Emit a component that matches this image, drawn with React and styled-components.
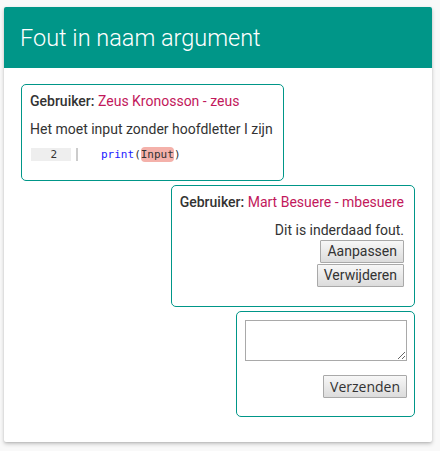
import React from 'react';
import styled, { createGlobalStyle } from 'styled-components';

const GlobalStyle = createGlobalStyle`
  html, body {
    margin: 0;
    padding: 0;
    background: #f9f9f9;
  }
  body {
    font-family: Roboto, "Liberation Sans", sans-serif;
    color: #333;
  }
`;

const Page = styled.div`
  padding: 7px 8px 10px 4px;
`;

const Card = styled.div`
  background: #fff;
  box-shadow: 0 2px 4px rgba(0, 0, 0, 0.2), 0 1px 2px rgba(0, 0, 0, 0.1);
  border-radius: 2px;
  overflow: hidden;
`;

const Header = styled.div`
  background: #009688;
  height: 61px;
  display: flex;
  align-items: center;
  padding: 0 16px;
`;

const Title = styled.h1`
  margin: 0;
  font-size: 23.5px;
  font-weight: 300;
  color: #fff;
`;

const Body = styled.div`
  padding: 16px 17px 25px;
  display: flex;
  flex-direction: column;
  gap: 4px;
`;

const Comment = styled.div`
  align-self: ${p => (p.$right ? 'flex-end' : 'flex-start')};
  border: 1px solid #009688;
  border-radius: 5px;
  padding: 6px 10px ${p => (p.$form ? '18px' : '19px')} 8px;
  font-size: 14px;
  line-height: 20px;
`;

const Author = styled.div`
  font-weight: 500;
  color: #333;
`;

const Name = styled.span`
  font-weight: 400;
  color: #c2185b;
`;

const Text = styled.p`
  margin: 8px 0 0;
  text-align: ${p => (p.$right ? 'right' : 'left')};
`;

const CodeLine = styled.div`
  display: flex;
  align-items: center;
  margin-top: 9px;
  font-family: "DejaVu Sans Mono", "Liberation Mono", monospace;
  font-size: 11px;
  line-height: 13px;
`;

const LineNo = styled.span`
  width: 40px;
  box-sizing: border-box;
  text-align: right;
  padding-right: 14px;
  background: #eee;
  color: #333;
  margin-left: 1px;
`;

const Code = styled.span`
  margin-left: 5px;
  border-left: 2px solid #ccc;
  padding-left: 23px;
  color: #333;
`;

const Keyword = styled.span`
  color: #1a1aff;
`;

const Mark = styled.span`
  background: #f4b1aa;
  border-radius: 4px;
  padding: 1px 0;
`;

const Actions = styled.div`
  display: flex;
  flex-direction: column;
  align-items: flex-end;
  gap: 1px;
`;

const Button = styled.button`
  font-family: ${p => (p.$alt ? '"Open Sans", Roboto, sans-serif' : 'Roboto, "Liberation Sans", sans-serif')};
  font-size: 14px;
  line-height: 19px;
  color: #333;
  background: linear-gradient(#f7f7f7, #dcdcdc);
  border: 1px solid #a9a9a9;
  border-radius: 1px;
  padding: 1px 6px;
  margin: 0;
`;

const Form = styled.form`
  display: flex;
  flex-direction: column;
  align-items: flex-end;
  gap: 14px;
  margin: 2px -3px 0 0;
`;

const TextArea = styled.textarea`
  width: 162px;
  height: 41px;
  box-sizing: border-box;
  border: 1px solid #a9a9a9;
  margin: 0;
  resize: both;
`;

export default function App() {
  return (
    <>
      <GlobalStyle />
      <Page>
        <Card>
          <Header>
            <Title>Fout in naam argument</Title>
          </Header>
          <Body>
            <Comment>
              <Author>
                Gebruiker: <Name>Zeus Kronosson - zeus</Name>
              </Author>
              <Text>Het moet input zonder hoofdletter I zijn</Text>
              <CodeLine>
                <LineNo>2</LineNo>
                <Code>
                  <Keyword>print</Keyword>(<Mark>Input</Mark>)
                </Code>
              </CodeLine>
            </Comment>
            <Comment $right>
              <Author>
                Gebruiker: <Name>Mart Besuere - mbesuere</Name>
              </Author>
              <Text $right>Dit is inderdaad fout.</Text>
              <Actions>
                <Button type="button">Aanpassen</Button>
                <Button type="button">Verwijderen</Button>
              </Actions>
            </Comment>
            <Comment $right $form>
              <Form onSubmit={e => e.preventDefault()}>
                <TextArea />
                <Button type="submit" $alt>Verzenden</Button>
              </Form>
            </Comment>
          </Body>
        </Card>
      </Page>
    </>
  );
}
